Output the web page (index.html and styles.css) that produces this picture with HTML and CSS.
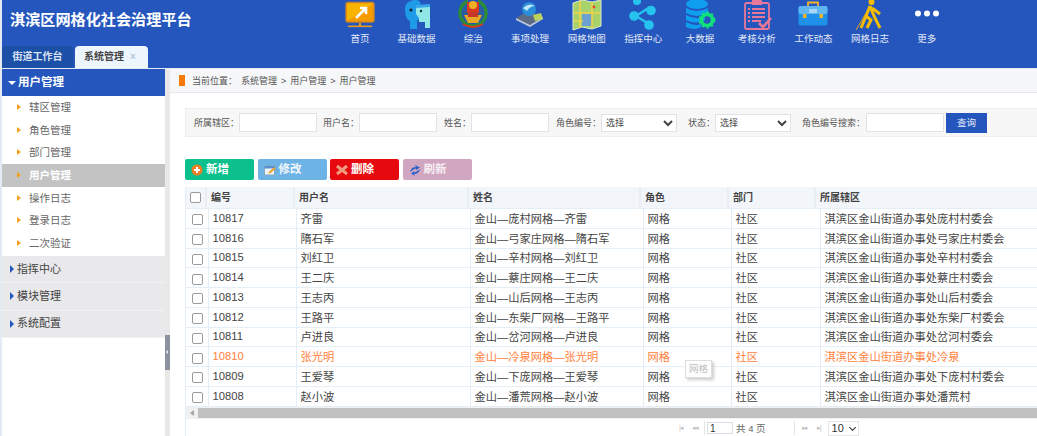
FILE: index.html
```html
<!DOCTYPE html>
<html lang="zh">
<head>
<meta charset="utf-8">
<title>淇滨区网格化社会治理平台</title>
<link rel="stylesheet" href="styles.css">
</head>
<body>
<div class="app">
  <header class="topbar">
    <div class="brand">
      <h1 class="title">淇滨区网格化社会治理平台</h1>
      <div class="tabs">
        <div class="tab">街道工作台</div>
        <div class="tab tab-active">系统管理<span class="tab-close">×</span></div>
      </div>
    </div>
    <nav class="nav">
      <div class="nav-item"><svg class="nav-icon" viewBox="0 0 30 30"><rect x="1" y="2.5" width="28" height="19.5" rx="2" fill="#f8b400" stroke="#c9812a" stroke-width="1.5"/><path d="M2 21 L28 4 V21 Z" fill="#f59b00"/><path d="M11 18 L20 9 M15 8 H21 V14" stroke="#fff" stroke-width="2.6" fill="none"/><rect x="14" y="23" width="2" height="3" fill="#e89b20"/><rect x="3" y="25.5" width="24" height="1.6" fill="#e89b20"/></svg><span>首页</span></div>
      <div class="nav-item"><svg class="nav-icon" viewBox="0 0 30 30"><path d="M3 9 C3 2 9 0 14 0 C18 0 19 3 19 8 V20 H15 V29 H8 V21 C5 20 3 16 3 9Z" fill="#1e9ae6"/><path d="M14 6 H28 V28 H23 V22 H17 V18 L14 14Z" fill="#8fe6e6"/><path d="M14 5 L28 4 V7 L14 8Z" fill="#38a7e8"/><circle cx="9" cy="10" r="1.6" fill="#123"/><circle cx="19" cy="11" r="1.2" fill="#123"/></svg><span>基础数据</span></div>
      <div class="nav-item"><svg class="nav-icon" viewBox="0 0 30 30"><path d="M10 1 A13 13 0 1 0 20 1" fill="none" stroke="#2c8a3c" stroke-width="3.6"/><circle cx="15" cy="13" r="10" fill="#2d5f99"/><path d="M9 2 H21 V13 H9Z" fill="#d63a20"/><circle cx="15" cy="5" r="4" fill="#f0b020"/><path d="M6 15 H24 L20 23 H10Z" fill="#e8a828"/><path d="M10 12 H20 V17 H10Z" fill="#c83828"/><path d="M5 24 Q15 30 25 24" stroke="#d63a20" stroke-width="2" fill="none"/></svg><span>综治</span></div>
      <div class="nav-item"><svg class="nav-icon" viewBox="0 0 30 30"><path d="M1 18 L13 11 L28 17 L15 25Z" fill="#5d6c86"/><path d="M1 18 L15 25 L28 17 L28 19 L15 27 L1 20Z" fill="#c0c8d4"/><circle cx="14" cy="9" r="7" fill="#2a8fd8"/><path d="M8 8 Q14 2 20 6 Q15 6 12 11Z" fill="#bfe6fa"/><path d="M18 15 L26 13 L28 19 L20 21Z" fill="#b9d35a"/></svg><span>事项处理</span></div>
      <div class="nav-item"><svg class="nav-icon" viewBox="0 0 30 30"><path d="M1 3 L10 0 L20 2 L29 0 V26 L20 29 L10 27 L1 30Z" fill="#a8d36a" stroke="#dfe8cf" stroke-width="1"/><path d="M10 14 H20 V26 H10Z" fill="#6c9fd2"/><path d="M8 1 V28 M20 2 V28 M2 13 H28 M2 21 H11" stroke="#f2d24a" stroke-width="1.6"/><circle cx="22" cy="7" r="1.4" fill="#d43"/></svg><span>网格地图</span></div>
      <div class="nav-item"><svg class="nav-icon" viewBox="0 0 30 30"><path d="M8 16 L22 7 M8 16 L21 24" stroke="#27c3ef" stroke-width="2.4"/><circle cx="6" cy="16" r="4.8" fill="#27c3ef"/><circle cx="23" cy="10.5" r="4.8" fill="#27c3ef"/><circle cx="21" cy="25" r="4.8" fill="#27c3ef"/><circle cx="9" cy="1" r="4" fill="#27c3ef"/></svg><span>指挥中心</span></div>
      <div class="nav-item"><svg class="nav-icon" viewBox="0 0 30 30"><ellipse cx="12" cy="4" rx="11" ry="5" fill="#0f9fee"/><path d="M1 8 Q12 14 23 8 V13 Q12 19 1 13Z" fill="#0f9fee"/><path d="M1 15 Q12 21 20 16 V20 Q12 25 1 20Z" fill="#0f9fee"/><path d="M1 22 Q10 27 16 24 V27 Q10 31 1 27Z" fill="#0f9fee"/><circle cx="22" cy="20" r="5.5" fill="none" stroke="#12e07c" stroke-width="3.6"/><circle cx="22" cy="20" r="7.6" fill="none" stroke="#12e07c" stroke-width="1.6" stroke-dasharray="2.5 2.5"/></svg><span>大数据</span></div>
      <div class="nav-item"><svg class="nav-icon" viewBox="0 0 30 30"><rect x="3" y="3" width="24" height="26" rx="1.5" fill="none" stroke="#e8789a" stroke-width="1.8"/><path d="M11 4 V1 H19 V4 Z" fill="none" stroke="#e8789a" stroke-width="1.8"/><path d="M10 9 H23 M10 13 H23 M10 17 H23 M10 21 H19 M6 9 H8 M6 13 H8 M6 17 H8 M6 21 H8" stroke="#e8789a" stroke-width="2"/><path d="M17 23 L21 27 L29 18" fill="none" stroke="#e8789a" stroke-width="2.6"/></svg><span>考核分析</span></div>
      <div class="nav-item"><svg class="nav-icon" viewBox="0 0 30 30"><path d="M10 7 V2.5 H20 V7" fill="none" stroke="#f3b32a" stroke-width="1.8"/><rect x="0.5" y="6" width="29" height="19.5" rx="2.5" fill="#1e92ea"/><rect x="0.5" y="6" width="29" height="8" rx="2" fill="#60b6f2"/><rect x="11" y="9" width="8" height="4" fill="#a8d6f6"/><rect x="5" y="14" width="3.5" height="4" fill="#f3b32a"/><rect x="21.5" y="14" width="3.5" height="4" fill="#f3b32a"/></svg><span>工作动态</span></div>
      <div class="nav-item"><svg class="nav-icon" viewBox="0 0 30 30"><circle cx="16.5" cy="2" r="3" fill="#f5bc00"/><path d="M15 6 L11 16 L6 28 M15 6 L19 16 L25 28 M11 16 L16 20 L12 28 M17 8 L25 14" stroke="#f5bc00" stroke-width="3" fill="none"/><path d="M11 13 L1 30" stroke="#e0a810" stroke-width="1"/></svg><span>网格日志</span></div>
      <div class="nav-item"><svg class="nav-icon" viewBox="0 0 30 30"><circle cx="6" cy="13.5" r="3" fill="#fff"/><circle cx="15" cy="13.5" r="3" fill="#fff"/><circle cx="24" cy="13.5" r="3" fill="#fff"/></svg><span>更多</span></div>
    </nav>
  </header>

  <div class="workspace">
    <aside class="sidebar">
      <div class="menu-head"><i class="caret-down"></i>用户管理</div>
      <ul class="menu">
        <li>辖区管理</li>
        <li>角色管理</li>
        <li>部门管理</li>
        <li class="menu-active">用户管理</li>
        <li>操作日志</li>
        <li>登录日志</li>
        <li>二次验证</li>
      </ul>
      <div class="menu-group"><i class="caret-right"></i>指挥中心</div>
      <div class="menu-group"><i class="caret-right"></i>模块管理</div>
      <div class="menu-group"><i class="caret-right"></i>系统配置</div>
    </aside>
    <div class="splitter"><span class="splitter-handle"></span></div>
    <main class="main">
      <div class="crumbs"><i class="crumb-mark"></i><b>当前位置：</b>系统管理 &gt; 用户管理 &gt; 用户管理</div>
      <form class="filters">
        <label class="f-label f1">所属辖区：</label><input class="f-input" type="text">
        <label class="f-label f2">用户名：</label><input class="f-input" type="text">
        <label class="f-label f3">姓名：</label><input class="f-input" type="text">
        <label class="f-label f4">角色编号：</label><select class="f-select"><option>选择</option></select>
        <label class="f-label f5">状态：</label><select class="f-select"><option>选择</option></select>
        <label class="f-label f6">角色编号搜索：</label><input class="f-input" type="text">
        <span class="f-btn">查询</span>
      </form>
      <div class="toolbar">
        <span class="btn btn-add"><svg class="btn-icon" viewBox="0 0 12 12"><circle cx="6" cy="6" r="5.5" fill="#ef7d22"/><path d="M6 3 V9 M3 6 H9" stroke="#fff" stroke-width="2"/></svg>新增</span>
        <span class="btn btn-edit"><svg class="btn-icon" viewBox="0 0 12 12"><rect x="0.5" y="2" width="10" height="9" fill="#eef5fb" stroke="#8ab"/><rect x="0.5" y="2" width="10" height="2.5" fill="#5a8fd0"/><path d="M5 9 L11 4" stroke="#f0a020" stroke-width="2"/></svg>修改</span>
        <span class="btn btn-del"><svg class="btn-icon" viewBox="0 0 12 12"><path d="M1 2 L11 10 M11 2 L1 10" stroke="#f29a80" stroke-width="3"/></svg>删除</span>
        <span class="btn btn-ref"><svg class="btn-icon" viewBox="0 0 12 12"><path d="M1 8 Q2 3 7 3 L6 1 L11 3.5 L7 6 V4.5 Q4 5 1 8Z" fill="#2b63c8"/><path d="M11 5 Q10 10 5 10 L6 12 L2 9.5 L5 7 V8.5 Q8 8 11 5Z" fill="#2b63c8"/></svg>刷新</span>
      </div>
      <div class="grid">
        <table class="grid-head">
          <colgroup><col class="hc0"><col class="hc1"><col class="hc2"><col class="hc3"><col class="hc4"><col class="hc5"><col class="hc6"></colgroup>
          <tr><th><input class="check" type="checkbox"></th><th>编号</th><th>用户名</th><th>姓名</th><th>角色</th><th>部门</th><th>所属辖区</th></tr>
        </table>
        <table class="grid-body">
          <colgroup><col class="bc0"><col class="bc1"><col class="bc2"><col class="bc3"><col class="bc4"><col class="bc5"><col class="bc6"></colgroup>
          <tr><td><input class="check" type="checkbox"></td><td>10817</td><td>齐雷</td><td>金山—庞村网格—齐雷</td><td>网格</td><td>社区</td><td>淇滨区金山街道办事处庞村村委会</td></tr>
          <tr><td><input class="check" type="checkbox"></td><td>10816</td><td>隋石军</td><td>金山—弓家庄网格—隋石军</td><td>网格</td><td>社区</td><td>淇滨区金山街道办事处弓家庄村委会</td></tr>
          <tr><td><input class="check" type="checkbox"></td><td>10815</td><td>刘红卫</td><td>金山—辛村网格—刘红卫</td><td>网格</td><td>社区</td><td>淇滨区金山街道办事处辛村村委会</td></tr>
          <tr><td><input class="check" type="checkbox"></td><td>10814</td><td>王二庆</td><td>金山—蔡庄网格—王二庆</td><td>网格</td><td>社区</td><td>淇滨区金山街道办事处蔡庄村委会</td></tr>
          <tr><td><input class="check" type="checkbox"></td><td>10813</td><td>王志丙</td><td>金山—山后网格—王志丙</td><td>网格</td><td>社区</td><td>淇滨区金山街道办事处山后村委会</td></tr>
          <tr><td><input class="check" type="checkbox"></td><td>10812</td><td>王路平</td><td>金山—东柴厂网格—王路平</td><td>网格</td><td>社区</td><td>淇滨区金山街道办事处东柴厂村委会</td></tr>
          <tr><td><input class="check" type="checkbox"></td><td>10811</td><td>卢进良</td><td>金山—岔河网格—卢进良</td><td>网格</td><td>社区</td><td>淇滨区金山街道办事处岔河村委会</td></tr>
          <tr class="row-hot"><td><input class="check" type="checkbox"></td><td>10810</td><td>张光明</td><td>金山—冷泉网格—张光明</td><td>网格</td><td>社区</td><td>淇滨区金山街道办事处冷泉</td></tr>
          <tr><td><input class="check" type="checkbox"></td><td>10809</td><td>王爱琴</td><td>金山—下庞网格—王爱琴</td><td>网格</td><td>社区</td><td>淇滨区金山街道办事处下庞村村委会</td></tr>
          <tr><td><input class="check" type="checkbox"></td><td>10808</td><td>赵小波</td><td>金山—潘荒网格—赵小波</td><td>网格</td><td>社区</td><td>淇滨区金山街道办事处潘荒村</td></tr>
        </table>
        <div class="hscroll"><span class="hscroll-arrow"></span><span class="hscroll-thumb"></span></div>
        <div class="pager">
          <span class="pg-ico">|◂</span><span class="pg-ico">◂◂</span><i class="pg-sep"></i>
          <input class="pg-input" type="text" value="1"><span class="pg-total">共 4 页</span><i class="pg-sep pg-sep2"></i>
          <span class="pg-ico">▸▸</span><span class="pg-ico">▸|</span>
          <span class="pg-size"><select class="pg-select"><option>10</option></select></span>
        </div>
      </div>
      <div class="tip">网格</div>
    </main>
  </div>
</div>
</body>
</html>
```
FILE: styles.css
```css
* { box-sizing: border-box; }
html, body { margin: 0; height: 100%; overflow: hidden; background: #fff; }
body { font-family: "Liberation Sans", "Noto Sans CJK SC", sans-serif; font-size: 11px; color: #444; }
.app { width: 1037px; height: 436px; display: flex; flex-direction: column; overflow: hidden; background: #e6eaf2; padding-left: 2px; }

.topbar { height: 68px; display: flex; background: #2456bd; flex: none; }
.brand { width: 329.6px; flex: none; display: flex; flex-direction: column; justify-content: space-between; }
.title { margin: 9px 0 0 8px; font-size: 15.15px; line-height: 22px; font-weight: 700; color: #fff; white-space: nowrap; }
.tabs { display: flex; gap: 2px; height: 22px; }
.tab { width: 71px; background: #1c4fa6; color: #dbe4f4; font-size: 10px; font-weight: 700; line-height: 22px; text-align: center; border-radius: 3px 3px 0 0; }
.tab-active { width: 73px; background: #edf6fd; color: #444; padding-right: 3px; border-radius: 4px 4px 0 0; }
.tab-close { color: #b4c6d8; margin-left: 6px; font-size: 10px; }
.nav { display: flex; }
.nav-item { width: 56.7px; display: flex; flex-direction: column; align-items: center; color: #e3eaf7; font-size: 9.5px; line-height: 12px; }
.nav-icon { width: 30px; height: 30px; display: block; margin-bottom: 3px; overflow: visible; }

.workspace { flex: 1; display: flex; margin-top: 1px; min-height: 0; background: #fff; }
.sidebar { width: 163px; flex: none; background: #fff; }
.menu-head { height: 27px; background: #2456bd; color: #fff; font-size: 11.5px; font-weight: 700; line-height: 27px; padding-left: 6px; display: flex; align-items: center; }
.caret-down { width: 0; height: 0; border: 4px solid transparent; border-top: 4px solid #fff; border-bottom: 0; margin-right: 2px; }
.menu { list-style: none; margin: 0; height: 160px; padding: 0; }
.menu li { height: 22.7px; line-height: 22.7px; padding-left: 27px; color: #666; font-size: 10.5px; position: relative; }
.menu li::before { content: ""; position: absolute; left: 15px; top: 8px; border: 3px solid transparent; border-left: 4px solid #f6a020; border-right: 0; }
.menu .menu-active { background: #c3c3c3; color: #fff; font-weight: 700; }
.menu-group { height: 27.3px; background: #e9e9eb; border-bottom: 1px solid #f2f2f3; color: #444; font-size: 11px; line-height: 27px; padding-left: 8px; display: flex; align-items: center; }
.caret-right { width: 0; height: 0; border: 4px solid transparent; border-left: 4px solid #2456bd; border-right: 0; margin-right: 3px; }

.splitter { width: 5px; flex: none; background: #e8e8e8; position: relative; }
.splitter-handle { position: absolute; left: 0; top: 266px; width: 5px; height: 35px; background: #8d929e; }
.splitter-handle::after { content: ""; position: absolute; left: 1px; top: 15px; border: 2px solid transparent; border-right: 2px solid #eee; border-left: 0; }

.main { flex: 1; min-width: 0; position: relative; overflow: hidden; background: #fff; }
.crumbs { height: 24px; background: #f6f7f9; border-bottom: 1px solid #e6e8ec; display: flex; align-items: center; padding-left: 9px; font-size: 9px; color: #555; word-spacing: 1.5px; }
.crumbs b { font-weight: 400; margin-right: 4px; }
.crumb-mark { width: 6px; height: 11px; background: #f47a0a; margin-right: 7px; }

.filters { margin: 15px 0 0 15px; height: 29px; background: #f7f7f7; border: 1px solid #eeeeee; border-right: 0; display: flex; align-items: center; font-size: 9px; color: #555; padding-left: 8px; }
.f-label { white-space: nowrap; }
.f2 { margin-left: 6px; }
.f3 { margin-left: 7px; }
.f4 { margin-left: 7px; }
.f5 { margin-left: 11px; }
.f6 { margin: 0 1px 0 11px; }
.f-input { width: 78px; height: 19px; border: 1px solid #e2e2e2; background: #fff; padding: 0; margin: 0; }
.f-select { width: 76px; height: 18px; border: 1px solid #e2e2e2; background: #fff; font: 9px "Liberation Sans", "Noto Sans CJK SC", sans-serif; color: #444; margin: 0; }
.f-btn { width: 41px; height: 20px; margin-left: 2px; background: #2456bd; color: #e6edfa; line-height: 20px; text-align: center; font-size: 9.5px; }

.toolbar { display: flex; margin: 22px 0 0 15px; gap: 3.5px; height: 22px; }
.btn { width: 69px; height: 21px; border-radius: 2px; color: #fff; font-weight: 700; font-size: 11.5px; line-height: 21px; display: flex; align-items: center; padding-left: 6px; }
.btn-icon { width: 12px; height: 12px; margin-right: 3px; flex: none; }
.btn-add { background: #0cc08e; }
.btn-edit { background: #6db3e6; color: #f2f7fc; }
.btn-del { background: #e60a0e; }
.btn-ref { background: #d1a6c0; color: #f6eef3; }

.grid { margin: 6px 0 0 15px; width: 1050px; border-left: 1px solid #e4eef7; }
.grid-head, .grid-body { border-collapse: collapse; table-layout: fixed; width: 1050px; }
.hc0 { width: 20px; } .hc1 { width: 88px; } .hc2 { width: 174px; } .hc3 { width: 172px; } .hc4 { width: 88px; } .hc5 { width: 87px; } .hc6 { width: 421px; }
.bc0 { width: 22px; } .bc1 { width: 88px; } .bc2 { width: 174px; } .bc3 { width: 173px; } .bc4 { width: 88px; } .bc5 { width: 89px; } .bc6 { width: 416px; }
.grid-head th { height: 21px; padding: 0 0 2px 4px; background: #f2f5f9; border-right: 2px solid #e9eef5; border-bottom: 1px solid #e4eef7; text-align: left; font-size: 10px; font-weight: 700; color: #444; white-space: nowrap; }
.grid-head th:first-child { padding: 0 0 0 4px; }
.grid-body td { height: 19.75px; padding: 0 0 1px 4px; border-right: 1px solid #e4eef7; border-bottom: 1px solid #e4eef7; font-size: 11.25px; white-space: nowrap; color: #444; overflow: hidden; }
.grid-body td:first-child { padding: 3px 0 0 6px; }
.row-hot td { color: #ff7f3a; }
.check { width: 11px; height: 11px; margin: 0; display: block; appearance: none; background: #fff; border: 1px solid #9a9a9a; border-radius: 2px; }

.hscroll { height: 12px; background: #f1f1f1; display: flex; align-items: center; padding-left: 4px; width: 852px; }
.hscroll-arrow { border: 3px solid transparent; border-right: 4px solid #a5a5a5; border-left: 0; margin-right: 4px; }
.hscroll-thumb { flex: 1; height: 10px; background: #c0c0c0; }
.pager { height: 19px; display: flex; align-items: center; padding-left: 488px; font-size: 9.5px; color: #666; }
.pg-ico { width: 14px; text-align: center; font-size: 7px; color: #c0c0c0; letter-spacing: -1px; }
.pg-sep { width: 1px; height: 14px; background: #e4e4e4; margin: 0 2px; }
.pg-sep2 { margin: 0 3px 0 28px; }
.pg-input { width: 26px; height: 12px; padding: 0 0 0 2px; border: 1px solid #d8dfe8; font: 10px "Liberation Sans", sans-serif; color: #333; margin: 0; }
.pg-total { margin-left: 3px; white-space: nowrap; font-size: 9.5px; }
.pg-size { position: relative; margin-left: 2px; display: block; }
.pg-size::after { content: ""; position: absolute; right: 4px; top: 4px; width: 4px; height: 4px; border-right: 1.5px solid #333; border-bottom: 1.5px solid #333; transform: rotate(45deg); }
.pg-select { appearance: none; display: block; width: 31px; height: 15px; padding: 0 0 0 3px; border: 1px solid #e6e6e6; background: #fff; font: 11px "Liberation Sans", sans-serif; color: #333; }

.tip { position: absolute; left: 515px; top: 291px; width: 27px; height: 18px; background: #fdfdfd; border: 1px solid #dedede; box-shadow: 2px 2px 3px #ccc; color: #bdbdbd; font-size: 9.5px; line-height: 16px; text-align: center; }
```
